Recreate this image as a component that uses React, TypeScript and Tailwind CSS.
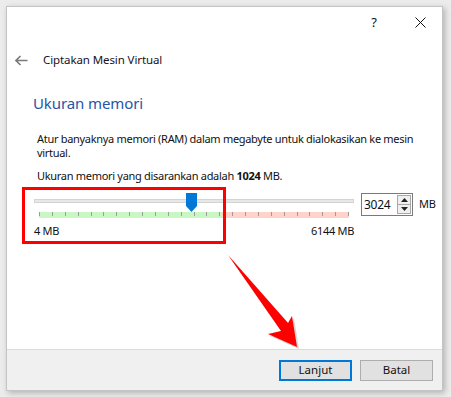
import React from 'react';

const FONT = { fontFamily: '"Noto Sans", "Open Sans", Arial, sans-serif' };

const ticks = Array.from({ length: 25 }, (_, i) => i);

const MemorySlider: React.FC = () => (
  <div className="relative w-[320px] pt-[6px]">
    {/* track */}
    <div className="h-[4px] bg-[#e7e7e7] border border-[#d4d4d4]" />
    {/* thumb */}
    <svg className="absolute top-0 left-[152px]" width="11" height="19" viewBox="0 0 11 19">
      <polygon points="0,0 11,0 11,13 5.5,19 0,13" fill="#0078d7" />
    </svg>
    {/* tick band */}
    <div className="relative mt-[9px] mx-[5px] h-[6px] flex">
      <div className="w-[59%] bg-[#c9f7c4]" />
      <div className="flex-1 bg-[#ffd3ca]" />
      <div className="absolute inset-x-0 top-0 flex justify-between">
        {ticks.map((t) => (
          <div key={t} className="w-px h-[4px] bg-[#9c9c9c]" />
        ))}
      </div>
    </div>
    <div className="mt-[6px] flex justify-between text-[11px] leading-[14px] tracking-[-0.3px] text-[#111]">
      <span>4 MB</span>
      <span>6144 MB</span>
    </div>
  </div>
);

const SpinBox: React.FC = () => (
  <div className="flex items-center w-[52px] h-[23px] border border-[#7a7a7a] bg-white">
    <span className="flex-1 pl-[2px] text-[12px] leading-none tracking-[-0.3px] text-[#111]">3024</span>
    <div className="flex flex-col w-[14px] h-[19px] mr-[1px] border border-[#a8a8a8] bg-[#f0f0f0]">
      <div className="flex-1 flex items-center justify-center border-b border-[#a8a8a8]">
        <svg width="7" height="4" viewBox="0 0 7 4"><polygon points="0,4 7,4 3.5,0" fill="#222" /></svg>
      </div>
      <div className="flex-1 flex items-center justify-center">
        <svg width="7" height="4" viewBox="0 0 7 4"><polygon points="0,0 7,0 3.5,4" fill="#222" /></svg>
      </div>
    </div>
  </div>
);

const App: React.FC = () => {
  return (
    <div className="relative w-[451px] h-[397px] bg-[#ececec] pl-[6px] pt-[6px] overflow-hidden" style={FONT}>
      <div className="flex flex-col w-[437px] h-[385px] bg-white border border-[#c4c4c4] shadow-[2px_2px_6px_rgba(0,0,0,0.25)]">
        {/* title bar */}
        <div className="h-[31px] flex items-center justify-end pr-[16px] gap-[38px]">
          <span className="text-[13px] leading-none text-[#111]">?</span>
          <svg width="11" height="11" viewBox="0 0 11 11">
            <path d="M0.5 0.5 L10.5 10.5 M10.5 0.5 L0.5 10.5" stroke="#111" strokeWidth="1" />
          </svg>
        </div>

        {/* nav row */}
        <div className="h-[44px] flex items-center pl-[8px]">
          <svg width="13" height="11" viewBox="0 0 13 11">
            <path d="M12.5 5.5 H1.5 M5.5 1 L1 5.5 L5.5 10" stroke="#7a7a7a" strokeWidth="1.6" fill="none" />
          </svg>
          <span className="ml-[15px] text-[11.5px] tracking-[-0.1px] text-[#1a1022]">Ciptakan Mesin Virtual</span>
        </div>

        {/* content */}
        <div className="pl-[26px] mt-[11px]">
          <h1 className="text-[15px] leading-[20px] tracking-[-0.1px] text-[#2656a6]">Ukuran memori</h1>
        </div>
        <div className="pl-[30px] mt-[19px] text-[11px] leading-[14px] tracking-[-0.3px] text-[#111]">
          <p>
            Atur banyaknya memori (RAM) dalam megabyte untuk dialokasikan ke mesin
            <br />
            virtual.
          </p>
          <p className="mt-[9px]">
            Ukuran memori yang disarankan adalah <b>1024</b> MB.
          </p>
        </div>

        <div className="flex items-start pl-[27px] mt-[10px]">
          <MemorySlider />
          <div className="ml-[7px] flex items-center">
            <SpinBox />
            <span className="ml-[6px] text-[11px] tracking-[-0.3px] text-[#111]">MB</span>
          </div>
        </div>

        {/* footer */}
        <div className="mt-auto h-[41px] flex items-center justify-end gap-[8px] pr-[9px] bg-[#f0f0f0] border-t border-[#dadada]">
          <button className="w-[73px] h-[21px] bg-[#e1e1e1] border-2 border-[#0078d7] text-[11.5px] leading-none text-[#111]">
            Lanjut
          </button>
          <button className="w-[73px] h-[21px] bg-[#e1e1e1] border border-[#adadad] text-[11.5px] leading-none text-[#111]">
            Batal
          </button>
        </div>
      </div>

      {/* annotation: red box */}
      <div className="absolute left-[22px] top-[187px] w-[204px] h-[57px] border-[3px] border-[#ff0000]" />

      {/* annotation: red arrow */}
      <svg className="absolute inset-0 pointer-events-none" width="451" height="397" viewBox="0 0 451 397">
        <polygon
          points="228,255 288,323 292,316 297,347 268,334 281,331"
          fill="#bbb"
          opacity="0.6"
          transform="translate(2,2)"
        />
        <polygon points="228,255 288,323 292,316 297,347 268,334 281,331" fill="#ff0000" />
      </svg>
    </div>
  );
};

export default App;
